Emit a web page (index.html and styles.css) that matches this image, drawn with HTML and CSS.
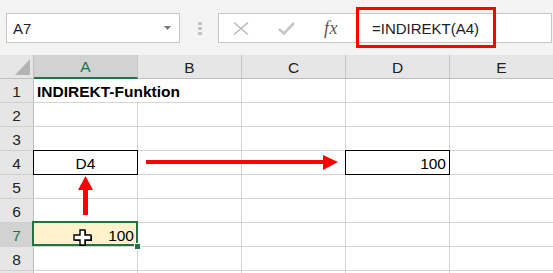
FILE: index.html
```html
<!DOCTYPE html>
<html lang="de">
<head>
    <meta charset="UTF-8">
    <meta name="viewport" content="width=device-width, initial-scale=1.0">
    <title>INDIREKT-Funktion</title>
    <link rel="stylesheet" href="styles.css">
</head>
<body>
    <div class="toolbar">
        <div class="namebox">
            <span>A7</span>
            <svg class="dropdown" width="7" height="4" viewBox="0 0 7 4"><path d="M0 0H7L3.5 4Z" fill="#7a7a7a"/></svg>
        </div>
        <div class="grip"><i></i><i></i><i></i></div>
        <div class="formula">
            <div class="fbtns">
                <svg width="16" height="13" viewBox="0 0 16 13"><path d="M1 0.5L15 12.5M15 0.5L1 12.5" stroke="#bdbdbd" stroke-width="1.6" fill="none"/></svg>
                <svg width="17" height="13" viewBox="0 0 17 13"><path d="M1 7L6 11.5L16 1" stroke="#c6c6c6" stroke-width="2.6" fill="none"/></svg>
                <span class="fx">fx</span>
            </div>
            <div class="finput">=INDIREKT(A4)</div>
        </div>
        <div class="highlight"></div>
    </div>

    <div class="sheet">
        <div class="cell corner"><span class="tri"></span></div>
        <div class="cell colhead sel">A</div>
        <div class="cell colhead">B</div>
        <div class="cell colhead">C</div>
        <div class="cell colhead">D</div>
        <div class="cell colhead">E</div>

        <div class="cell rowhead">1</div>
        <div class="cell wide title">INDIREKT-Funktion</div>
        <div class="cell"></div>
        <div class="cell"></div>
        <div class="cell"></div>

        <div class="cell rowhead">2</div>
        <div class="cell"></div>
        <div class="cell"></div>
        <div class="cell"></div>
        <div class="cell"></div>
        <div class="cell"></div>

        <div class="cell rowhead">3</div>
        <div class="cell"></div>
        <div class="cell"></div>
        <div class="cell"></div>
        <div class="cell"></div>
        <div class="cell"></div>

        <div class="cell rowhead">4</div>
        <div class="cell boxed center">D4</div>
        <div class="cell"></div>
        <div class="cell"></div>
        <div class="cell boxed right">100</div>
        <div class="cell"></div>

        <div class="cell rowhead">5</div>
        <div class="cell"></div>
        <div class="cell"></div>
        <div class="cell"></div>
        <div class="cell"></div>
        <div class="cell"></div>

        <div class="cell rowhead">6</div>
        <div class="cell"></div>
        <div class="cell"></div>
        <div class="cell"></div>
        <div class="cell"></div>
        <div class="cell"></div>

        <div class="cell rowhead sel">7</div>
        <div class="cell active right">100<span class="handle"></span></div>
        <div class="cell"></div>
        <div class="cell"></div>
        <div class="cell"></div>
        <div class="cell"></div>

        <div class="cell rowhead">8</div>
        <div class="cell"></div>
        <div class="cell"></div>
        <div class="cell"></div>
        <div class="cell"></div>
        <div class="cell"></div>

        <div class="cell rowhead"></div>
        <div class="cell"></div>
        <div class="cell"></div>
        <div class="cell"></div>
        <div class="cell"></div>
        <div class="cell"></div>

        <!-- Pfeile und Mauszeiger liegen über dem Raster -->
        <svg class="overlay" width="553" height="218" viewBox="0 0 553 218">
            <rect x="146" y="105" width="178" height="4" fill="#ff0000"/>
            <path d="M323 100L338 107L323 115Z" fill="#ff0000"/>
            <rect x="83" y="134" width="5" height="26" fill="#ff0000"/>
            <path d="M78 135L85.5 121L93 135Z" fill="#ff0000"/>
            <g transform="translate(73 174)">
                <path d="M7 1H12V6H18V11H12V16H7V11H1V6H7Z" fill="#000" transform="translate(1 1)"/>
                <path d="M7 1H12V6H18V11H12V16H7V11H1V6H7Z" fill="#fff" stroke="#000" stroke-width="1.4"/>
            </g>
        </svg>
    </div>
</body>
</html>
```

FILE: styles.css
```css
body { margin: 0; background: #fff; font-family: "Liberation Sans", Arial, sans-serif; color: #000; overflow: hidden; }

.toolbar { position: relative; height: 55px; background: #f3f3f3; display: flex; align-items: flex-start; padding-top: 13px; box-sizing: border-box; }
.namebox { margin-left: 6px; width: 174px; height: 30px; box-sizing: border-box; background: #fff; border: 1px solid #c6c6c6; display: flex; align-items: center; justify-content: space-between; padding: 0 8px 0 6px; font-size: 15px; color: #222; }
.grip { width: 4px; margin: 9px 16px 0 18px; display: flex; flex-direction: column; gap: 2px; }
.grip i { display: block; width: 4px; height: 3px; background: #c4c4c4; }
.formula { width: 334px; height: 30px; box-sizing: border-box; background: #fff; border: 1px solid #c6c6c6; display: flex; align-items: center; }
.fbtns { width: 138px; display: flex; align-items: center; gap: 29px; padding-left: 14px; box-sizing: border-box; }
.fx { font-family: "Liberation Serif", serif; font-style: italic; font-size: 18px; color: #5a5a5a; letter-spacing: 0.5px; }
.finput { padding-left: 15px; font-size: 15px; color: #222; }
.highlight { position: absolute; left: 356px; top: 7px; width: 140px; height: 41px; box-sizing: border-box; border: 3px solid #ff0000; }

.sheet { position: relative; height: 218px; overflow: hidden; display: grid; grid-template-columns: 34px repeat(5, 104px); grid-template-rows: repeat(10, 24px); font-size: 15.5px; }
.cell { position: relative; box-sizing: border-box; border-right: 1px solid #d4d4d4; border-bottom: 1px solid #d4d4d4; display: flex; align-items: center; padding: 2px 3px 0; white-space: nowrap; }
.corner { background: #e6e6e6; border-right-color: #bdbdbd; border-bottom-color: #bdbdbd; }
.tri { position: absolute; left: 15px; top: 4px; width: 15px; height: 16px; background: #b4b4b4; clip-path: polygon(100% 0, 100% 100%, 0 100%); }
.colhead { background: #e6e6e6; justify-content: center; border-right-color: #c6c6c6; border-bottom-color: #bdbdbd; color: #222; }
.colhead.sel { background: #d2d2d2; color: #217346; border-bottom: 2px solid #217346; }
.rowhead { background: #e6e6e6; justify-content: center; border-right-color: #bdbdbd; border-bottom-color: #d0d0d0; color: #222; }
.rowhead.sel { background: #d2d2d2; color: #217346; }

.wide { grid-column: span 2; }
.title { font-weight: bold; }
.center { justify-content: center; }
.right { justify-content: flex-end; }
.boxed::after { content: ""; position: absolute; top: -1px; left: -1px; right: -1px; bottom: -1px; border: 1px solid #000; }
.active { background: #fff2cc; z-index: 2; }
.active::after { content: ""; position: absolute; top: -2px; left: -2px; right: -1px; bottom: 0; border: 2px solid #217346; }
.handle { position: absolute; left: 100px; top: 20px; width: 5px; height: 5px; background: #217346; border: 1px solid #fff; z-index: 3; }

.overlay { position: absolute; left: 0; top: 0; z-index: 5; pointer-events: none; }
```
